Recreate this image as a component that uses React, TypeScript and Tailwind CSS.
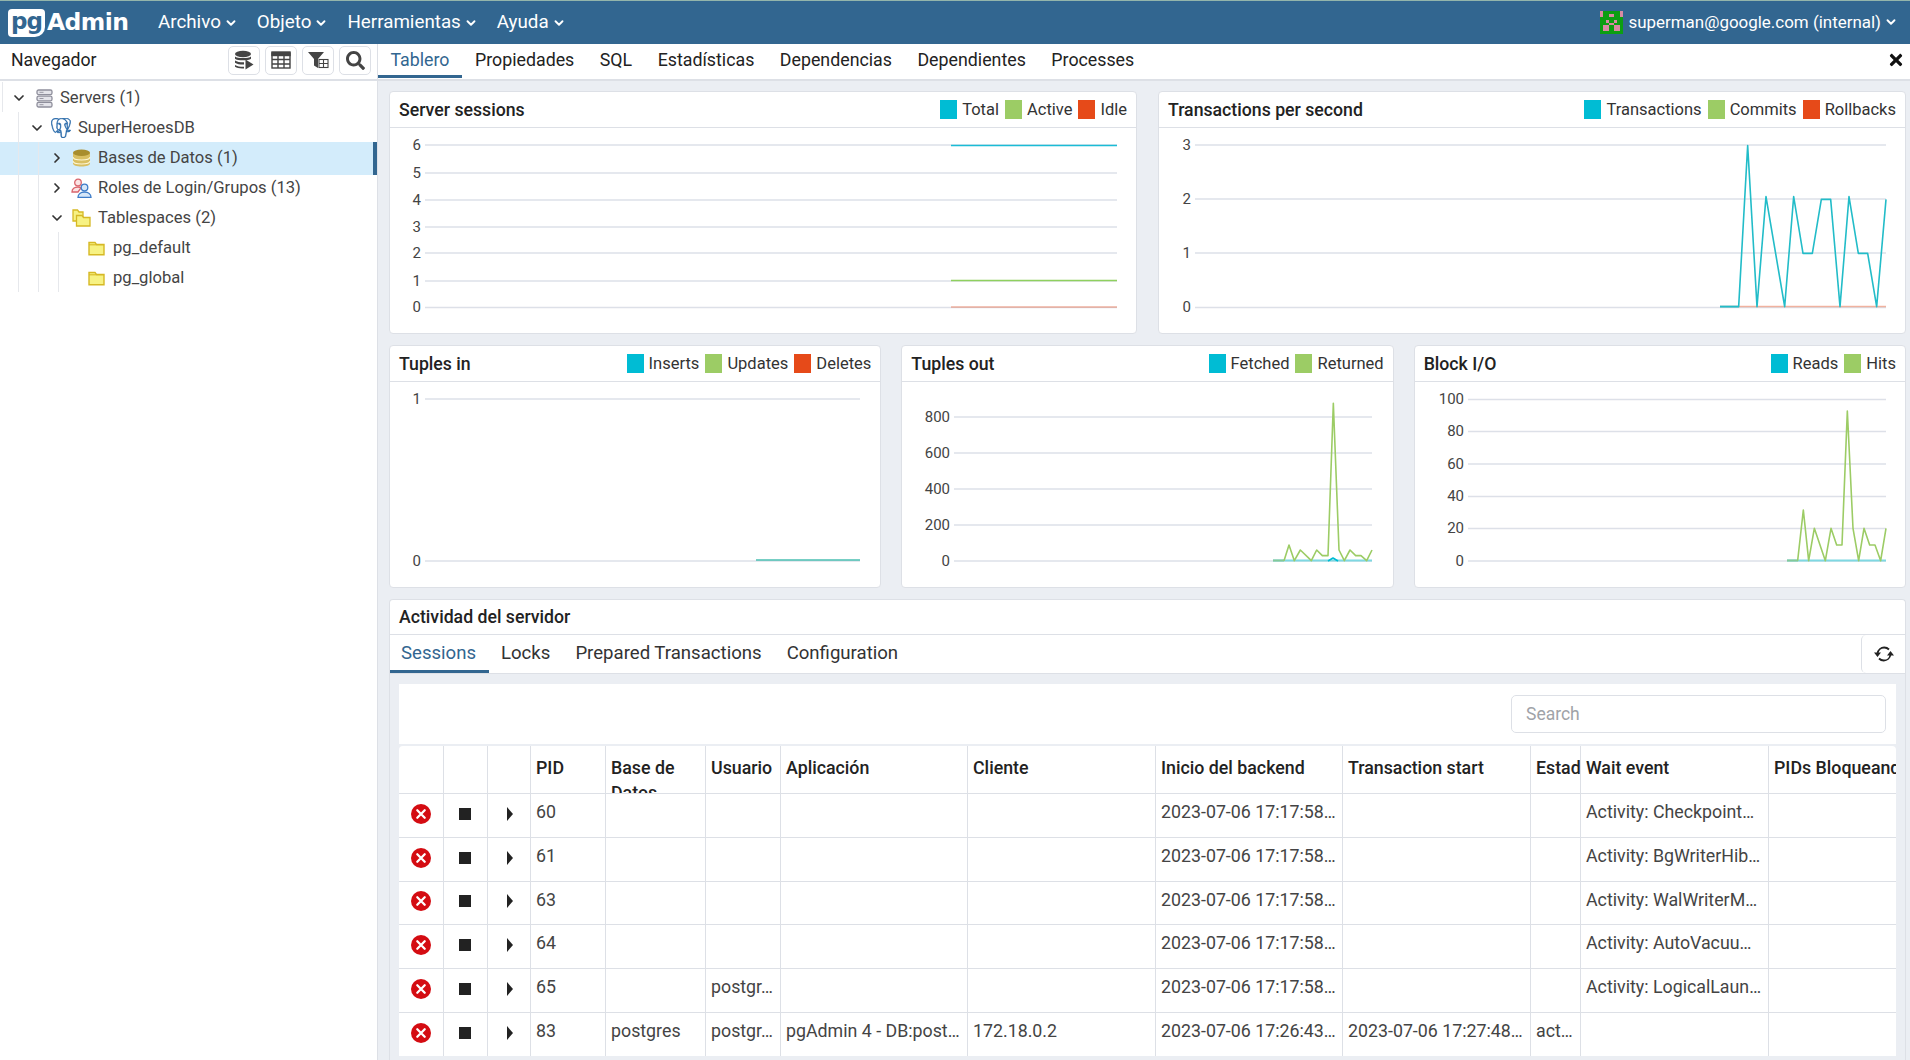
import { ChevronDown, ChevronRight } from 'lucide-react';
import { FaTimes, FaSearch } from 'react-icons/fa';
import { SiPostgresql } from 'react-icons/si';
import type { ReactNode } from 'react';

const TEAL = '#00bcd4';
const GREEN = '#9ccc65';
const RED = '#e64a19';

function Logo() {
  return (
    <div className="flex items-center ml-[8px] w-[140px]">
      <div className="w-[37px] h-[28px] bg-white rounded-[4px] rounded-br-[10px] flex items-center justify-center text-[#326690] font-[family-name:'DejaVu_Sans',sans-serif] font-bold text-[23px] leading-none tracking-[-1px] pb-[3px]">
        pg
      </div>
      <span className="ml-[2px] text-white font-[family-name:'DejaVu_Sans',sans-serif] font-bold text-[23.5px] leading-none tracking-[-0.6px]">
        Admin
      </span>
    </div>
  );
}

function MenuItem({ label, className }: { label: string; className: string }) {
  return (
    <div className={`flex items-center gap-[3px] text-white text-[18.8px] ${className}`}>
      <span>{label}</span>
      <ChevronDown size={14} strokeWidth={3.2} />
    </div>
  );
}

function Avatar() {
  const pink = [
    [0, 0], [7, 0], [0, 1], [3, 1], [4, 1], [7, 1], [2, 3], [5, 3], [3, 4], [4, 4],
    [1, 5], [2, 5], [5, 5], [6, 5], [1, 6], [2, 6], [5, 6], [6, 6],
  ];
  return (
    <svg width="23" height="23" viewBox="0 0 8 8" shapeRendering="crispEdges">
      <rect width="8" height="8" fill="#0c9e12" />
      {pink.map(([x, y]) => (
        <rect key={`${x}-${y}`} x={x} y={y} width="1" height="1" fill="#d98aa3" />
      ))}
    </svg>
  );
}

function TopBar() {
  return (
    <header className="h-[44px] bg-[#326690] border-t border-[#93b5ab] flex items-center shrink-0">
      <Logo />
      <MenuItem label="Archivo" className="ml-[10px]" />
      <MenuItem label="Objeto" className="ml-[19px]" />
      <MenuItem label="Herramientas" className="ml-[19px]" />
      <MenuItem label="Ayuda" className="ml-[19px]" />
      <div className="ml-auto mr-[12px] flex items-center text-white text-[16.95px]">
        <Avatar />
        <span className="ml-[5px]">superman@google.com (internal)</span>
        <ChevronDown size={14} strokeWidth={3.2} className="ml-[3px]" />
      </div>
    </header>
  );
}

function ToolButton({ children }: { children: ReactNode }) {
  return (
    <div className="w-[32px] h-[29px] border border-[#dde0e6] rounded-[5px] flex items-center justify-center text-[#444]">
      {children}
    </div>
  );
}

function DbPlayIcon() {
  return (
    <svg width="20" height="20" viewBox="0 0 20 20" fill="#444">
      <ellipse cx="9" cy="4" rx="8" ry="3.2" />
      <path d="M1 6.5c2 2 14 2 16 0v2.2c-2 2-14 2-16 0zM1 10.5c2 1.6 7 2 9 1.8v2.2c-3 .2-7-.4-9-1.8zM1 15c2 1.4 6 1.9 9 1.8v1.6c-4 .3-7-.4-9-1.6z" />
      <path d="M11.5 9.5l8 5-8 5z" />
    </svg>
  );
}

function GridIcon() {
  return (
    <svg width="20" height="18" viewBox="0 0 20 18" fill="none" stroke="#444" strokeWidth="1.4">
      <rect x="1" y="2" width="18" height="15" />
      <rect x="1" y="1" width="18" height="3.5" fill="#444" />
      <path d="M7 4v13M13 4v13M1 8.5h18M1 13h18" />
    </svg>
  );
}

function FilterTableIcon() {
  return (
    <svg width="21" height="18" viewBox="0 0 21 18">
      <path d="M0 1h16l-6 7v9l-4-2.5V8z" fill="#444" />
      <g fill="none" stroke="#444" strokeWidth="1.1">
        <rect x="11" y="8.5" width="9" height="8" fill="#fff" />
        <path d="M15.5 8.5v8M11 12.5h9" />
      </g>
    </svg>
  );
}

function ServersIcon() {
  return (
    <svg width="17" height="19" viewBox="0 0 17 19" fill="#e4e4ea" stroke="#8f8f9c" strokeWidth="1.3">
      <rect x="1" y="1" width="15" height="4.6" rx="1.6" />
      <rect x="1" y="7.2" width="15" height="4.6" rx="1.6" />
      <rect x="1" y="13.4" width="15" height="4.6" rx="1.6" />
      <path d="M3.5 3.3h4M3.5 9.5h4M3.5 15.7h4" strokeWidth="0.9" />
    </svg>
  );
}

function DatabaseIcon() {
  return (
    <svg width="19" height="18" viewBox="0 0 19 18">
      <path d="M1 3.5v11c0 1.7 3.6 3 8.5 3s8.5-1.3 8.5-3v-11z" fill="#d9bf62" />
      <ellipse cx="9.5" cy="3.7" rx="8.5" ry="3.2" fill="#a88d2d" />
      <path d="M1 8c0 1.7 3.6 3 8.5 3s8.5-1.3 8.5-3M1 12c0 1.7 3.6 3 8.5 3s8.5-1.3 8.5-3" fill="none" stroke="#fdf6d4" strokeWidth="1.1" />
    </svg>
  );
}

function RolesIcon() {
  return (
    <svg width="21" height="20" viewBox="0 0 21 20" fill="none" strokeWidth="1.3">
      <circle cx="7" cy="4.5" r="3.3" stroke="#d9646c" fill="#fbe4e4" />
      <path d="M1 14c0-3 2.5-5 6-5 1.5 0 2.5.3 3 .8L7 14z" stroke="#d9646c" fill="#fbe4e4" />
      <circle cx="13.5" cy="9.5" r="3.3" stroke="#3d7cc9" fill="#d5e6f8" />
      <path d="M7 19.3c0-3.3 2.8-5.3 6.5-5.3s6.5 2 6.5 5.3z" stroke="#3d7cc9" fill="#d5e6f8" />
    </svg>
  );
}

function FolderIcon() {
  return (
    <svg width="17" height="15" viewBox="0 0 17 15">
      <path d="M1 13.8V1.5h6l1.5 2H16v10.3z" fill="#f7f283" stroke="#d6b925" strokeWidth="1.4" />
      <path d="M1 3.8h15" stroke="#d6b925" strokeWidth="1.1" />
    </svg>
  );
}

function FoldersIcon() {
  return (
    <svg width="19" height="18" viewBox="0 0 19 18" fill="#f7f283" stroke="#d6b925" strokeWidth="1.3">
      <path d="M1 12V1h4.5L7 3h4v9z" />
      <path d="M4.5 17V6.5H10l1.500 2H18V17z" />
    </svg>
  );
}

type TreeRowProps = {
  className: string;
  chevron?: 'down' | 'right';
  icon: ReactNode;
  iconClass: string;
  labelClass: string;
  label: string;
  selected?: boolean;
};

function TreeRow({ className, chevron, icon, iconClass, labelClass, label, selected }: TreeRowProps) {
  return (
    <div
      className={`flex items-center text-[#444] ${className} ${
        selected ? 'h-[33px] -my-[1.5px] bg-[#d3ecfb] border-r-4 border-[#326690]' : 'h-[30px]'
      }`}
    >
      {chevron === 'down' && <ChevronDown size={16} strokeWidth={2.6} className="text-[#333] shrink-0" />}
      {chevron === 'right' && <ChevronRight size={16} strokeWidth={2.6} className="text-[#333] shrink-0" />}
      <span className={`flex items-center justify-center shrink-0 ${iconClass}`}>{icon}</span>
      <span className={`whitespace-nowrap ${labelClass}`}>{label}</span>
    </div>
  );
}

function Navigator() {
  return (
    <aside className="w-[378px] shrink-0 border-r border-[#dde0e6] bg-white flex flex-col">
      <div className="h-[37px] border-b-2 border-[#dde0e6] flex items-center pl-[11px] pr-[6px] text-[#222] text-[17.7px]">
        <span className="pb-[3px]">Navegador</span>
        <div className="ml-auto flex gap-[5px] -mt-[3px]">
          <ToolButton><DbPlayIcon /></ToolButton>
          <ToolButton><GridIcon /></ToolButton>
          <ToolButton><FilterTableIcon /></ToolButton>
          <ToolButton><FaSearch size={19} /></ToolButton>
        </div>
      </div>
      <div className="relative pt-[2px] text-[16.6px]">
        <div className="absolute left-[2px] top-[1px] h-[30px] border-l border-[#e6e8ec]" />
        <div className="absolute left-[18px] top-[31px] h-[180px] border-l border-[#e6e8ec] z-10" />
        <div className="absolute left-[38px] top-[61px] h-[150px] border-l border-[#e6e8ec] z-10" />
        <div className="absolute left-[58px] top-[151px] h-[60px] border-l border-[#e6e8ec] z-10" />
        <TreeRow className="pl-[11px]" chevron="down" icon={<ServersIcon />} iconClass="ml-[9px] w-[17px]" labelClass="ml-[7px]" label="Servers (1)" />
        <TreeRow className="pl-[29px]" chevron="down" icon={<SiPostgresql size={20} color="#1f62a5" strokeWidth={0.6} />} iconClass="ml-[6px] w-[20px]" labelClass="ml-[7px]" label="SuperHeroesDB" />
        <TreeRow className="pl-[49px]" chevron="right" selected icon={<DatabaseIcon />} iconClass="ml-[7px] w-[19px]" labelClass="ml-[7px]" label="Bases de Datos (1)" />
        <TreeRow className="pl-[49px]" chevron="right" icon={<RolesIcon />} iconClass="ml-[6px] w-[21px]" labelClass="ml-[6px]" label="Roles de Login/Grupos (13)" />
        <TreeRow className="pl-[49px]" chevron="down" icon={<FoldersIcon />} iconClass="ml-[7px] w-[19px]" labelClass="ml-[7px]" label="Tablespaces (2)" />
        <TreeRow className="pl-[88px]" icon={<FolderIcon />} iconClass="w-[17px]" labelClass="ml-[8px]" label="pg_default" />
        <TreeRow className="pl-[88px]" icon={<FolderIcon />} iconClass="w-[17px]" labelClass="ml-[8px]" label="pg_global" />
      </div>
    </aside>
  );
}

type Series = { points: number[][]; color: string; opacity?: number; width?: number };
type ChartProps = {
  x: number;
  y: number;
  w: number;
  h: number;
  gridStart: number;
  gridEnd: number;
  ticks: [string, number][];
  series: Series[];
};

// chart coordinates are page pixels, the viewBox shifts them into the card
function Chart({ x, y, w, h, gridStart, gridEnd, ticks, series }: ChartProps) {
  return (
    <svg width={w} height={h} viewBox={`${x} ${y} ${w} ${h}`} className="block">
      {ticks.map(([label, ty]) => (
        <g key={label}>
          <line x1={gridStart} x2={gridEnd} y1={ty} y2={ty} stroke="#dde0e8" strokeWidth="1.4" />
          <text x={gridStart - 4} y={ty + 4.5} textAnchor="end" fontSize="15" fill="#444" fontFamily="Roboto, sans-serif">
            {label}
          </text>
        </g>
      ))}
      {series.map((s, i) => (
        <polyline
          key={i}
          points={s.points.map((p) => p.join(',')).join(' ')}
          fill="none"
          stroke={s.color}
          strokeOpacity={s.opacity ?? 1}
          strokeWidth={s.width ?? 1.6}
          strokeLinejoin="round"
        />
      ))}
    </svg>
  );
}

function Legend({ items }: { items: [string, string][] }) {
  return (
    <div className="ml-auto flex items-center gap-[6px] text-[16.5px] text-[#333]">
      {items.map(([label, color]) => (
        <div key={label} className="flex items-center">
          <span className="w-[17px] h-[19px] mr-[5px]" style={{ backgroundColor: color }} />
          <span className="mt-[2px]">{label}</span>
        </div>
      ))}
    </div>
  );
}

function ChartCard({ title, legend, children }: { title: string; legend: [string, string][]; children: ReactNode }) {
  return (
    <section className="h-[243px] bg-white border border-[#dde0e6] rounded-[4px] overflow-hidden">
      <div className="h-[36px] border-b border-[#dde0e6] flex items-center pl-[9px] pr-[9px]">
        <span className="mt-[2px] text-[17.7px] font-medium text-[#222]">{title}</span>
        <Legend items={legend} />
      </div>
      {children}
    </section>
  );
}

const txPoints = [
  [660, 920], [716, 920], [743, 437], [771, 920], [798, 590], [854, 920], [881, 590], [909, 760], [937, 760],
  [964, 598], [992, 598], [1020, 920], [1047, 590], [1075, 760], [1103, 760], [1130, 920], [1158, 598],
].map(([a, b]) => [1500 + a / 3, b / 3]);

const tuplesOutPoints = [
  [72, 497], [87, 450], [103, 497], [121, 465], [154, 497], [170, 465], [187, 482], [204, 482], [220, 25],
  [237, 465], [253, 497], [270, 465], [287, 482], [303, 482], [320, 497], [336, 465],
].map(([a, b]) => [1260 + a / 3, 395 + b / 3]);

const blockPoints = [
  [50, 497], [67, 345], [83, 497], [100, 400], [133, 497], [150, 400], [167, 450], [183, 450], [199, 48],
  [216, 400], [233, 497], [249, 400], [266, 450], [282, 450], [299, 497], [315, 400],
].map(([a, b]) => [1780 + a / 3, 395 + b / 3]);

function Charts() {
  return (
    <>
      <div className="grid grid-cols-2 gap-x-[21px]">
        <ChartCard title="Server sessions" legend={[['Total', TEAL], ['Active', GREEN], ['Idle', RED]]}>
          <Chart
            x={390} y={128} w={746} h={205} gridStart={425} gridEnd={1117}
            ticks={[['6', 145], ['5', 173], ['4', 200], ['3', 227], ['2', 253], ['1', 281], ['0', 307.5]]}
            series={[
              { points: [[951, 145.5], [1117, 145.5]], color: '#1bbcd6' },
              { points: [[951, 280.5], [1117, 280.5]], color: '#8fd05e' },
              { points: [[951, 307], [1117, 307]], color: RED, opacity: 0.4 },
            ]}
          />
        </ChartCard>
        <ChartCard title="Transactions per second" legend={[['Transactions', TEAL], ['Commits', GREEN], ['Rollbacks', RED]]}>
          <Chart
            x={1159} y={128} w={746} h={205} gridStart={1195} gridEnd={1886}
            ticks={[['3', 145], ['2', 199], ['1', 253], ['0', 307.5]]}
            series={[
              { points: [[1720, 306.5], [1886, 306.5]], color: RED, opacity: 0.4 },
              { points: [[1720, 306.5], [1739, 306.5]], color: '#1bbcd6', opacity: 0.5 },
              { points: txPoints, color: '#22bcc8' },
            ]}
          />
        </ChartCard>
      </div>
      <div className="grid grid-cols-3 gap-x-[20px] mt-[11px]">
        <ChartCard title="Tuples in" legend={[['Inserts', TEAL], ['Updates', GREEN], ['Deletes', RED]]}>
          <Chart
            x={390} y={382} w={490} h={205} gridStart={425} gridEnd={860}
            ticks={[['1', 399], ['0', 561]]}
            series={[{ points: [[756, 560], [860, 560]], color: '#35b8a8', opacity: 0.9 }]}
          />
        </ChartCard>
        <ChartCard title="Tuples out" legend={[['Fetched', TEAL], ['Returned', GREEN]]}>
          <Chart
            x={902} y={382} w={490} h={205} gridStart={954} gridEnd={1372}
            ticks={[['800', 417], ['600', 453], ['400', 489], ['200', 525], ['0', 561]]}
            series={[
              { points: [[1273, 560.5], [1372, 560.5]], color: '#7fd8e2', width: 2 },
              { points: [[1273, 560.5], [1284, 560.5]], color: '#83c99a', width: 2 },
              { points: [[1328, 561], [1333, 558], [1338, 561]], color: TEAL },
              { points: tuplesOutPoints, color: '#9ccc65' },
            ]}
          />
        </ChartCard>
        <ChartCard title="Block I/O" legend={[['Reads', TEAL], ['Hits', GREEN]]}>
          <Chart
            x={1414} y={382} w={491} h={205} gridStart={1467} gridEnd={1885}
            ticks={[['100', 399.5], ['80', 431.5], ['60', 464], ['40', 496.5], ['20', 528.5], ['0', 561]]}
            series={[
              { points: [[1786, 560.5], [1885, 560.5]], color: '#7fd8e2', width: 2 },
              { points: [[1786, 560.5], [1797, 560.5]], color: '#83c99a', width: 2 },
              { points: blockPoints, color: '#9ccc65' },
            ]}
          />
        </ChartCard>
      </div>
    </>
  );
}

function RefreshIcon() {
  return (
    <svg width="20" height="20" viewBox="0 0 20 20" fill="#222">
      <path d="M3.5 9.5C4 5.8 7 3.5 10.2 3.5c2 0 3.6.8 4.8 2" fill="none" stroke="#222" strokeWidth="1.8" />
      <path d="M16.5 10.5c-.5 3.7-3.5 6-6.7 6-2 0-3.600-.8-4.800-2" fill="none" stroke="#222" strokeWidth="1.8" />
      <path d="M0 8.5h7L3.5 13zM13 11.5h7L16.5 7z" />
    </svg>
  );
}

function CancelIcon() {
  return (
    <svg width="20" height="20" viewBox="0 0 20 20">
      <circle cx="10" cy="10" r="10" fill="#d40c12" />
      <path d="M6.3 6.3l7.4 7.4M13.7 6.3l-7.4 7.4" stroke="#fff" strokeWidth="2.3" strokeLinecap="round" />
    </svg>
  );
}

const COLS = 'grid-cols-[45px_44px_43px_75px_100px_75px_187px_188px_187px_188px_50px_188px_127px]';

const HEADERS = ['', '', '', 'PID', 'Base de Datos', 'Usuario', 'Aplicación', 'Cliente', 'Inicio del backend', 'Transaction start', 'Estado', 'Wait event', 'PIDs Bloqueando'];

const SESSIONS = [
  ['60', '', '', '', '', '2023-07-06 17:17:58…', '', '', 'Activity: Checkpoint…'],
  ['61', '', '', '', '', '2023-07-06 17:17:58…', '', '', 'Activity: BgWriterHib…'],
  ['63', '', '', '', '', '2023-07-06 17:17:58…', '', '', 'Activity: WalWriterM…'],
  ['64', '', '', '', '', '2023-07-06 17:17:58…', '', '', 'Activity: AutoVacuu…'],
  ['65', '', 'postgr…', '', '', '2023-07-06 17:17:58…', '', '', 'Activity: LogicalLaun…'],
  ['83', 'postgres', 'postgr…', 'pgAdmin 4 - DB:post…', '172.18.0.2', '2023-07-06 17:26:43…', '2023-07-06 17:27:48…', 'act…', ''],
];

function SessionsTable() {
  return (
    <div className="flex-1 bg-white overflow-hidden rounded-t-[4px] mt-[2px]">
      <div className={`grid ${COLS} h-[48px] border-b border-[#dde0e6] overflow-hidden`}>
        {HEADERS.map((h, i) => (
          <div
            key={i}
            className={`h-[48px] overflow-hidden px-[5px] pt-[9px] text-[17.8px] leading-[25px] font-medium text-[#222] ${
              i === 10 ? 'whitespace-nowrap' : ''
            } ${i === 12 ? 'whitespace-nowrap' : 'border-r border-[#dde0e6]'}`}
          >
            {h}
          </div>
        ))}
      </div>
      {SESSIONS.map((row) => (
        <div key={row[0]} className={`grid ${COLS} h-[43.8px] border-b border-[#dde0e6]`}>
          <div className="border-r border-[#dde0e6] flex items-center justify-center pb-[3px]">
            <CancelIcon />
          </div>
          <div className="border-r border-[#dde0e6] flex items-center justify-center pb-[3px] pr-[1px]">
            <span className="w-[12px] h-[12px] bg-[#222]" />
          </div>
          <div className="border-r border-[#dde0e6] flex items-center justify-center pb-[3px] pr-[2px]">
            <span className="w-0 h-0 border-y-[7px] border-y-transparent border-l-[6.5px] border-l-[#222] ml-[3px]" />
          </div>
          {row.map((cell, i) => (
            <div key={i} className="px-[5px] pt-[5px] text-[17.8px] leading-[26px] text-[#444] whitespace-nowrap overflow-hidden border-r border-[#dde0e6]">
              {cell}
            </div>
          ))}
          <div />
        </div>
      ))}
    </div>
  );
}

function Activity() {
  return (
    <section className="mt-[11px] flex-1 min-h-0 bg-white border-x border-t border-[#dde0e6] rounded-t-[4px] flex flex-col overflow-hidden">
      <div className="h-[35px] shrink-0 border-b border-[#dde0e6] flex items-center pl-[9px] text-[17.7px] font-medium text-[#222]">
        Actividad del servidor
      </div>
      <div className="h-[39px] shrink-0 border-b border-[#dde0e6] flex text-[18.6px] text-[#333]">
        <div className="w-[99px] h-[38px] border-b-[3px] border-[#326690] pl-[11px] pt-[5px] text-[#326690]">Sessions</div>
        <div className="ml-[12px] pt-[5px]">Locks</div>
        <div className="ml-[25px] pt-[5px]">Prepared Transactions</div>
        <div className="ml-[25px] pt-[5px]">Configuration</div>
        <div className="ml-auto w-[44px] h-[38px] border-l border-[#dde0e6] rounded-l-[5px] flex items-center justify-center bg-white">
          <RefreshIcon />
        </div>
      </div>
      <div className="flex-1 min-h-0 bg-[#ebeef3] pt-[10px] pl-[9px] pr-[9px] pb-[4px] flex flex-col">
        <div className="h-[60px] shrink-0 bg-white flex items-center justify-end pr-[10px]">
          <input
            placeholder="Search"
            className="w-[375px] h-[38px] border border-[#dde0e6] rounded-[5px] px-[14px] text-[17.5px] placeholder:text-[#a0a3a8] outline-none"
          />
        </div>
        <SessionsTable />
      </div>
    </section>
  );
}

function TabBar() {
  const tabs = ['Propiedades', 'SQL', 'Estadísticas', 'Dependencias', 'Dependientes', 'Processes'];
  return (
    <div className="h-[37px] shrink-0 bg-white border-b-2 border-[#dde0e6] flex items-start text-[17.8px] text-[#222]">
      <div className="w-[84px] h-[34px] border-b-[3px] border-[#326690] text-[#326690] text-center pt-[3px]">Tablero</div>
      <div className="flex gap-[25.5px] ml-[13px] pt-[3px]">
        {tabs.map((t) => (
          <span key={t}>{t}</span>
        ))}
      </div>
      <FaTimes size={18} className="ml-auto mr-[5px] mt-[7px] text-[#111]" />
    </div>
  );
}

export default function App() {
  return (
    <div className="w-screen h-screen overflow-hidden flex flex-col bg-white font-[family-name:Roboto,sans-serif]">
      <TopBar />
      <div className="flex flex-1 min-h-0">
        <Navigator />
        <main className="flex-1 min-w-0 flex flex-col">
          <TabBar />
          <div className="flex-1 min-h-0 bg-[#ebeef3] pl-[11px] pr-[4px] pt-[10px] flex flex-col">
            <Charts />
            <Activity />
          </div>
        </main>
      </div>
    </div>
  );
}
